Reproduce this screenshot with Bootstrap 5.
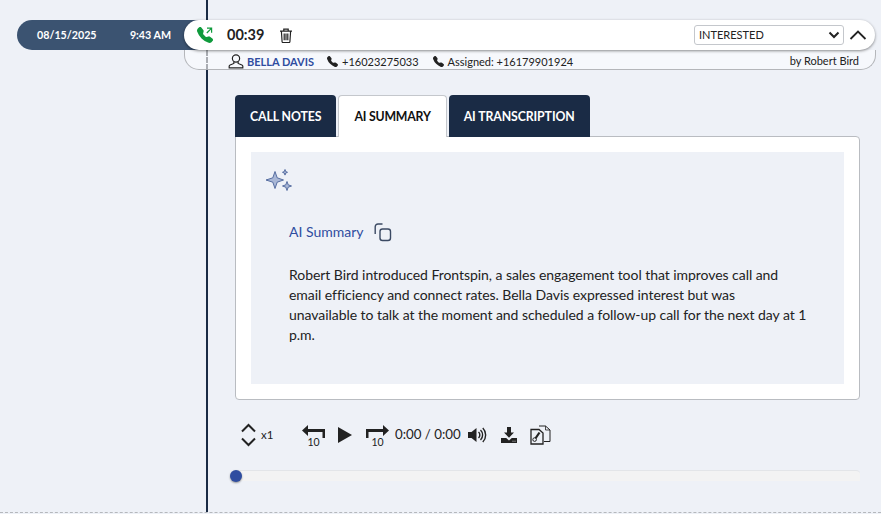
<!DOCTYPE html>
<html lang="en">
<head>
    <meta charset="UTF-8" />
    <meta name="viewport" content="width=device-width, initial-scale=1" />
    <title>Call detail</title>
    <link href="https://cdn.jsdelivr.net/npm/bootstrap@5.3.3/dist/css/bootstrap.min.css" rel="stylesheet" />
    <style>
        :root {
            --page-bg: #eef1f7;
            --navy: #1a2b45;
            --slate: #3b5371;
            --link-blue: #2f4da0;
            --ink: #222;
        }
        html, body { height: 100%; }
        body {
            background-color: var(--page-bg);
            font-family: Lato, "Liberation Sans", sans-serif;
            color: var(--ink);
            overflow: hidden;
        }
        /* page frame, dashed edge at the bottom */
        .page-frame {
            height: 513px;
            border-bottom: 1px dashed #b5b8bc;
        }
        .rail {
            margin-left: 206px;
            height: 512px;
            border-left: 2px solid var(--navy);
            padding-top: 20px;
        }
        .call-head {
            margin-left: -191px;
            width: 858px;
        }
        .date-pill {
            width: 187px;
            height: 30px;
            padding: 0 33px 0 20px;
            margin-right: -20px;
            background-color: var(--slate);
            color: #fff;
            font-size: 10.7px;
            font-weight: 700;
            border-radius: 15px 0 0 15px;
        }
        .call-pill {
            height: 30px;
            position: relative;
            z-index: 2;
            padding: 0 7px 0 13px;
            background-color: #fff;
            border-radius: 15px;
            box-shadow: 0 1px 3px rgba(0, 0, 0, .45);
        }
        .call-time {
            font-size: 14.5px;
            font-weight: 700;
            margin-left: 14px;
            margin-right: 15px;
        }
        .status-select {
            width: 150px;
            height: 20px;
            min-height: 0;
            padding: 0 0 0 4px;
            font-size: 11px;
            color: var(--ink);
            border: 1px solid #c4c7cc;
            border-radius: 3px;
            background-image: url("data:image/svg+xml,%3csvg xmlns='http://www.w3.org/2000/svg' viewBox='0 0 14 10'%3e%3cpath fill='none' stroke='%23222' stroke-width='2' d='M2.500 2.500 7 7l4.500-4.500'/%3e%3c/svg%3e");
            background-position: right 2px center;
            background-size: 14px 10px;
            line-height: 18px;
        }
        .call-sub {
            margin-left: -24px;
            width: 692px;
            height: 20px;
            padding: 3px 16px 0 43px;
            font-size: 11px;
            line-height: 15px;
            background: #f6f8fc;
            border: 1px solid #b4b6ba;
            border-top: 0;
            border-radius: 0 0 15px 15px;
            position: relative;
        }
        /* rail shows through the sub row as a dashed line */
        .sub-dash {
            position: absolute;
            left: 21px;
            top: 0;
            bottom: -1px;
            border-left: 2px dashed #a9acb2;
        }
        .contact-name {
            color: var(--link-blue);
            font-weight: 700;
            margin-left: 3px;
        }
        .phone-first { margin-left: 13px; }
        .phone-second { margin-left: 14px; }
        .call-body {
            padding: 25px 0 0 27px;
            width: 652px;
        }
        .call-tabs {
            border-bottom: 0;
            gap: 2px;
            margin-bottom: -1px;
            position: relative;
            z-index: 1;
        }
        .call-tabs .nav-link {
            height: 42px;
            padding: 0 15px;
            line-height: 44px;
            font-size: 12.3px;
            font-weight: 700;
            letter-spacing: -.1px;
            color: #fff;
            background-color: var(--navy);
            border: 0;
            border-radius: 4px 4px 0 0;
            margin: 0;
        }
        .call-tabs .nav-link.active {
            color: #111;
            background-color: #fff;
            border: 1px solid #c4c7cc;
            border-bottom: 0;
            line-height: 42px;
            letter-spacing: -.2px;
        }
        .tab-box {
            height: 264px;
            padding: 15px;
            background-color: #fff;
            border: 1px solid #b9bcc1;
            border-radius: 0 4px 4px 4px;
        }
        .summary-panel {
            height: 232px;
            background-color: var(--page-bg);
            padding: 16px 14px;
        }
        .summary-inner {
            padding: 27px 10px 0 24px;
        }
        .summary-title {
            font-size: 14px;
            color: var(--link-blue);
            line-height: 24px;
            margin-bottom: 21px;
        }
        .copy-icon { margin-left: 10px; }
        .summary-text {
            font-size: 14px;
            letter-spacing: -.05px;
            line-height: 20px;
            margin: 0;
            color: #222;
        }
        .player-bar {
            height: 30px;
            margin-top: 20px;
            padding-left: 5px;
            font-size: 13.3px;
        }
        .speed-label { font-size: 11.5px; margin-left: 4px; width: 40px; }
        .skip-btn { position: relative; display: inline-block; width: 25px; height: 24px; flex-shrink: 0; }
        .skip-btn span {
            position: absolute;
            left: 0;
            right: 0;
            bottom: -1px;
            text-align: center;
            font-size: 10.5px;
            line-height: 12px;
        }
        .play-icon { margin-left: 12px; margin-right: 13px; }
        .player-time { margin-left: 5px; }
        .vol-icon { margin-left: 7px; }
        .dl-icon { margin-left: 14px; }
        .zip-icon { margin-left: 13px; }
        .seek-bar {
            position: relative;
            height: 11px;
            margin-top: 20px;
            width: 625px;
            background: #f3f3f3;
            border-top: 1px solid #e3e5e8;
            border-radius: 4px 4px 0 0;
        }
        .seek-knob {
            position: absolute;
            left: -5px;
            top: -1px;
            width: 12px;
            height: 12px;
            border-radius: 50%;
            background: #2f4da0;
            box-shadow: 0 1px 2px rgba(0, 0, 0, .4);
        }
    </style>
</head>
<body>
<div class="page-frame">
    <div class="rail">
        <div class="call-head d-flex">
            <div class="date-pill d-flex align-items-center justify-content-between flex-shrink-0">
                <span>08/15/2025</span><span>9:43 AM</span>
            </div>
            <div class="call-pill d-flex align-items-center flex-grow-1">
                <svg width="16" height="16" viewBox="0 0 16 16" fill="#0f9a3c"><path d="M1.885.511a1.745 1.745 0 0 1 2.61.163L6.29 2.98c.329.423.445.974.315 1.494l-.547 2.19a.678.678 0 0 0 .178.643l2.457 2.457a.678.678 0 0 0 .644.178l2.189-.547a1.745 1.745 0 0 1 1.494.315l2.306 1.794c.829.645.905 1.87.163 2.611l-1.034 1.034c-.74.74-1.846 1.065-2.877.702a18.634 18.634 0 0 1-7.01-4.42 18.634 18.634 0 0 1-4.42-7.009c-.362-1.03-.037-2.137.703-2.877L1.885.511z"/><path d="M10 1.2h4.6v4.6M14.4 1.4 9.8 6" fill="none" stroke="#0f9a3c" stroke-width="1.2"/></svg>
                <span class="call-time">00:39</span>
                <svg width="14" height="15" viewBox="0 0 14 15" fill="none" stroke="#222" stroke-width="1.2"><path d="M1 3.2h12M4.800 3V1.200h4.400V3M2.400 3.200l.7 10.600a.8.8 0 0 0 .8.7h6.200a.8.8 0 0 0 .8-.7l.7-10.600M5.200 5.500v6.800M7 5.500v6.800M8.800 5.500v6.800"/></svg>
                <select class="form-select status-select ms-auto" aria-label="Status">
                    <option selected>INTERESTED</option>
                </select>
                <svg class="ms-1" width="20" height="12" viewBox="0 0 20 12" fill="none" stroke="#222" stroke-width="1.8"><path d="M2.500 10 10 2.500 17.500 10"/></svg>
            </div>
        </div>
        <div class="call-sub d-flex justify-content-between">
            <span class="sub-dash"></span>
            <div class="d-flex align-items-center">
                <svg width="16" height="15" viewBox="0 0 15 14" fill="none" stroke="#222" stroke-width="1.1"><circle cx="7.500" cy="4.200" r="3.400"/><path d="M5.500 7.400v1.400L2 10.200c-.6.3-.9.7-.9 1.300v1.400h12.800v-1.400c0-.6-.3-1-.9-1.300L9.500 8.800V7.400"/></svg>
                <span class="contact-name">BELLA DAVIS</span>
                <svg class="phone-first" width="11" height="11" viewBox="0 0 16 16" fill="#222"><path d="M1.885.511a1.745 1.745 0 0 1 2.61.163L6.29 2.98c.329.423.445.974.315 1.494l-.547 2.19a.678.678 0 0 0 .178.643l2.457 2.457a.678.678 0 0 0 .644.178l2.189-.547a1.745 1.745 0 0 1 1.494.315l2.306 1.794c.829.645.905 1.87.163 2.611l-1.034 1.034c-.74.74-1.846 1.065-2.877.702a18.634 18.634 0 0 1-7.01-4.42 18.634 18.634 0 0 1-4.42-7.009c-.362-1.03-.037-2.137.703-2.877L1.885.511z"/></svg>
                <span class="ms-1">+16023275033</span>
                <svg class="phone-second" width="11" height="11" viewBox="0 0 16 16" fill="#222"><path d="M1.885.511a1.745 1.745 0 0 1 2.61.163L6.29 2.98c.329.423.445.974.315 1.494l-.547 2.19a.678.678 0 0 0 .178.643l2.457 2.457a.678.678 0 0 0 .644.178l2.189-.547a1.745 1.745 0 0 1 1.494.315l2.306 1.794c.829.645.905 1.87.163 2.611l-1.034 1.034c-.74.74-1.846 1.065-2.877.702a18.634 18.634 0 0 1-7.01-4.42 18.634 18.634 0 0 1-4.42-7.009c-.362-1.03-.037-2.137.703-2.877L1.885.511z"/></svg>
                <span class="ms-1">Assigned: +16179901924</span>
            </div>
            <span>by Robert Bird</span>
        </div>

        <div class="call-body">
            <ul class="nav nav-tabs call-tabs">
                <li class="nav-item"><a class="nav-link" href="#">CALL NOTES</a></li>
                <li class="nav-item"><a class="nav-link active" href="#">AI SUMMARY</a></li>
                <li class="nav-item"><a class="nav-link" href="#">AI TRANSCRIPTION</a></li>
            </ul>
            <div class="tab-box">
                <div class="summary-panel">
                    <svg class="d-block" width="29" height="25" viewBox="0 0 29 25" fill="#a9b7d6" stroke="#4a6298" stroke-width=".9" stroke-linejoin="round"><path d="M10 3.500 12.200 9.800 18.500 12l-6.300 2.200L10 20.500 7.800 14.200 1 12l6.800-2.200zM20 1.500l.7 2 1.800.8-1.800.8-.7 2-.7-2-1.800-.8 1.800-.8zM22 13.500l1.200 3.300 3.300 1.200-3.300 1.200-1.200 3.300-1.200-3.300-3.300-1.200 3.300-1.200z"/></svg>
                    <div class="summary-inner">
                        <div class="summary-title d-flex align-items-center">
                            <span>AI Summary</span>
                            <svg class="copy-icon" width="18" height="19" viewBox="0 0 18 19" fill="none" stroke="#3b4a63" stroke-width="1.4"><rect x="6" y="6" width="10.500" height="11.500" rx="2.500"/><path d="M8.500 1H4C2.400 1 1.200 2.200 1.200 3.800V11"/></svg>
                        </div>
                        <p class="summary-text">Robert Bird introduced Frontspin, a sales engagement tool that improves call and<br>email efficiency and connect rates. Bella Davis expressed interest but was<br>unavailable to talk at the moment and scheduled a follow-up call for the next day at 1<br>p.m.</p>
                    </div>
                </div>
            </div>
            <div class="player-bar d-flex align-items-center">
                <svg width="17" height="24" viewBox="0 0 17 24" fill="none" stroke="#222" stroke-width="2"><path d="M2 8.500 8.500 2 15 8.500M2 15.500 8.500 22 15 15.500"/></svg>
                <span class="speed-label">x1</span>
                <span class="skip-btn">
                    <svg class="d-block" width="25" height="16" viewBox="0 0 25 16" fill="#222"><path d="M1 7.500 7 2v4h17v9h-2.500V9H7v4z"/></svg>
                    <span>10</span>
                </span>
                <svg class="play-icon" width="14" height="16" viewBox="0 0 14 16" fill="#222"><path d="M0 0l14 8-14 8z"/></svg>
                <span class="skip-btn">
                    <svg class="d-block" width="25" height="16" viewBox="0 0 25 16" fill="#222"><path d="M24 7.500 18 2v4H1v9h2.500V9H18v4z"/></svg>
                    <span>10</span>
                </span>
                <span class="player-time">0:00 / 0:00</span>
                <svg class="vol-icon" width="19" height="16" viewBox="0 0 19 16" fill="#222"><path d="M0 5h3.500L8.500 1v14l-5-4H0z"/><path d="M10.500 5a4 4 0 0 1 0 6M12.500 3a7 7 0 0 1 0 10M14.800 1a10 10 0 0 1 0 14" fill="none" stroke="#222" stroke-width="1.4"/></svg>
                <svg class="dl-icon" width="16" height="16" viewBox="0 0 16 16" fill="#222"><path d="M6 0h4v5.500h3L8 10.800 3 5.500h3zM0 11h5.200L8 13.500l2.800-2.500H16v5H0z"/><path d="M11.500 14.200h1M13.500 14.200h1" stroke="#fff" stroke-width=".8"/></svg>
                <svg class="zip-icon" width="21" height="20" viewBox="0 0 21 20" fill="none" stroke="#222"><path d="M9 1h6.500L20 5v11.500h-6"/><path d="M15.500 1v4H20" stroke-width=".8"/><path d="M1 4.500h8l4 3.500v11H1z" fill="#eef1f7" stroke-width="1.300"/><path d="M9.500 7.500 4 15.500" stroke-width="2.200"/><circle cx="4.600" cy="14.600" r="1.800" fill="#eef1f7"/></svg>
            </div>
            <div class="seek-bar"><span class="seek-knob"></span></div>
        </div>
    </div>
</div>
<script src="https://cdn.jsdelivr.net/npm/bootstrap@5.3.3/dist/js/bootstrap.bundle.min.js"></script>
</body>
</html>
